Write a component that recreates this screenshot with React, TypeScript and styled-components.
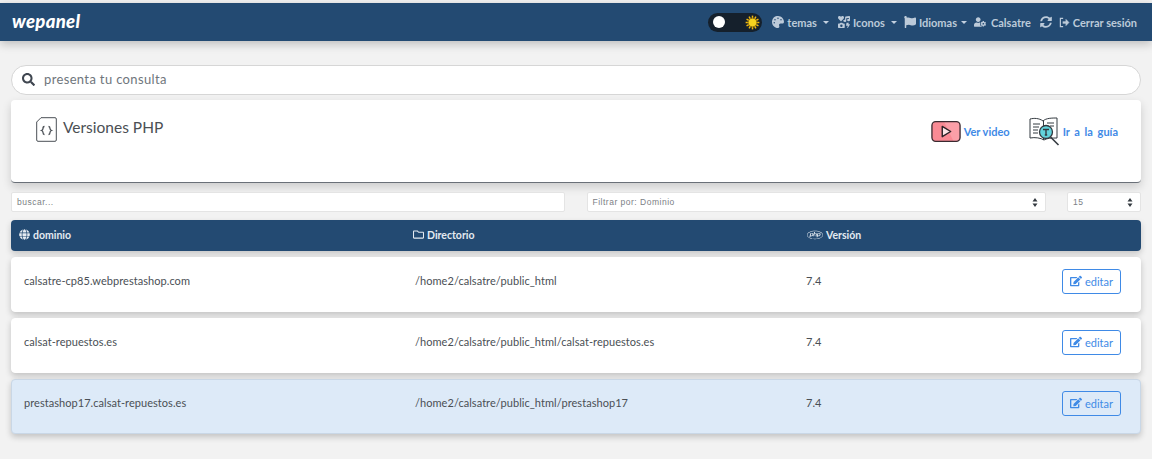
import React from "react";
import styled, { createGlobalStyle } from "styled-components";
import { FaPalette, FaIcons, FaFlag, FaUserCog, FaSyncAlt, FaSearch, FaGlobe, FaRegFolder, FaPhp, FaEdit } from "react-icons/fa";

const Global = createGlobalStyle`
  html, body { margin: 0; padding: 0; background: #f2f2f2; }
  body { font-family: Lato, "Noto Sans", sans-serif; color: #4a4f55; overflow: hidden; }
  * { box-sizing: border-box; }
`;

const Page = styled.div`
  width: 1152px;
  height: 459px;
  padding-top: 3px;
  overflow: hidden;
  background: #f2f2f2;
`;

const Navbar = styled.header`
  height: 38px;
  background: #234a72;
  display: flex;
  align-items: center;
  justify-content: space-between;
  padding: 0 15px 0 12px;
  box-shadow: 0 3px 9px rgba(0, 0, 0, 0.22);
`;

const Logo = styled.span`
  font-family: Lato, sans-serif;
  font-style: italic;
  font-weight: 900;
  font-size: 18.5px;
  color: #fff;
  letter-spacing: 0.3px;
  margin-bottom: 2px;
`;

const NavGroup = styled.nav`
  display: flex;
  align-items: center;
`;

const NavItem = styled.span<{ $ml?: number; $gap?: number }>`
  display: inline-flex;
  align-items: center;
  gap: ${(p) => p.$gap ?? 3}px;
  margin-left: ${(p) => p.$ml ?? 0}px;
  font-family: Lato, sans-serif;
  font-size: 11px;
  font-weight: 700;
  color: #bccad9;
  white-space: nowrap;
  svg { font-size: 12px; }
`;

const Caret = styled.i<{ $ml?: number }>`
  display: inline-block;
  width: 0;
  height: 0;
  margin-left: ${(p) => p.$ml ?? 4}px;
  border-top: 3px solid #c3d0df;
  border-left: 3px solid transparent;
  border-right: 3px solid transparent;
`;

const Toggle = styled.div`
  position: relative;
  width: 54px;
  height: 19px;
  border-radius: 10px;
  background: #15202c;
`;

const Knob = styled.span`
  position: absolute;
  left: 5px;
  top: 3.5px;
  width: 12px;
  height: 12px;
  border-radius: 50%;
  background: #fff;
`;

const SunSlot = styled.span`
  position: absolute;
  right: 2px;
  top: 2px;
  line-height: 0;
`;

const Main = styled.main`
  padding: 24px 11px 0;
`;

const SearchBar = styled.div`
  height: 30px;
  background: #fff;
  border: 1px solid #d6d6d6;
  border-radius: 15px;
  display: flex;
  align-items: center;
  gap: 9px;
  padding: 0 10px 2px;
  font-family: Lato, sans-serif;
  font-size: 13px;
  letter-spacing: 0.35px;
  color: #6f767c;
  svg { color: #3f4650; font-size: 13px; margin-top: 1px; }
`;

const HeaderCard = styled.section`
  margin-top: 5px;
  height: 83px;
  background: #fff;
  border-bottom: 1px solid #6a7078;
  border-radius: 4px;
  box-shadow: 0 4px 10px rgba(0, 0, 0, 0.16);
  display: flex;
  justify-content: space-between;
  align-items: flex-start;
  padding: 17px 23px 0 25px;
`;

const Title = styled.h1`
  margin: 0;
  display: flex;
  align-items: flex-start;
  gap: 6px;
  font-family: Lato, sans-serif;
  font-weight: 400;
  font-size: 15.5px;
  line-height: 20px;
  color: #4b4f54;
`;

const Guides = styled.div`
  display: flex;
  align-items: center;
  gap: 19px;
  margin-top: -1px;
`;

const Guide = styled.a<{ $wordGap?: number }>`
  display: inline-flex;
  align-items: center;
  gap: 3px;
  font-family: Lato, sans-serif;
  font-weight: 700;
  font-size: 11px;
  word-spacing: ${(p) => p.$wordGap ?? 0}px;
  color: #3f8ae6;
`;

const Filters = styled.div`
  margin-top: 9px;
  display: grid;
  grid-template-columns: 554px 459px 74px;
  justify-content: space-between;
  height: 20px;
`;

const Field = styled.div`
  position: relative;
  height: 20px;
  background: #fff;
  border: 1px solid #e4e4e4;
  border-radius: 2px;
  display: flex;
  align-items: center;
  padding: 0 5px;
  font-family: "Liberation Sans", sans-serif;
  font-size: 8.5px;
  letter-spacing: 0.5px;
  color: #7b8085;
`;

const SelectArrows = styled.svg`
  position: absolute;
  right: 7px;
  top: 5px;
`;

const TableHead = styled.div`
  margin-top: 8px;
  height: 31px;
  background: #234a72;
  border-radius: 4px;
  box-shadow: 0 3px 6px rgba(0, 0, 0, 0.18);
  color: #e4eaf1;
  font-family: Lato, sans-serif;
  font-weight: 700;
  font-size: 10.5px;
  display: grid;
  grid-template-columns: 391px 391px 1fr;
  align-items: center;
  padding: 0 0 2px 8px;
`;

const HeadCell = styled.span<{ $indent?: number; $iconSize?: number }>`
  display: flex;
  align-items: center;
  gap: 3px;
  margin-left: ${(p) => p.$indent ?? 0}px;
  svg { font-size: ${(p) => p.$iconSize ?? 11}px; }
`;

const Rows = styled.div`
  margin-top: 6px;
  display: flex;
  flex-direction: column;
  gap: 6px;
`;

const Row = styled.div<{ $active?: boolean }>`
  height: 55px;
  background: ${(p) => (p.$active ? "#ddeaf8" : "#fff")};
  border: 1px solid ${(p) => (p.$active ? "#c9d7e6" : "#fff")};
  border-radius: 4px;
  box-shadow: 0 3px 6px rgba(0, 0, 0, 0.2);
  display: grid;
  grid-template-columns: 391px 391px 1fr auto;
  align-items: center;
  padding: 0 19px 7px 12px;
  font-family: Lato, sans-serif;
  font-size: 11px;
  letter-spacing: 0.05px;
  color: #4a4f55;
`;

const Cell = styled.span`
  padding-bottom: 2px;
`;

const EditButton = styled.button`
  width: 59px;
  height: 25px;
  display: inline-flex;
  align-items: center;
  justify-content: center;
  gap: 3px;
  padding: 0;
  background: transparent;
  border: 1px solid #3f8ae6;
  border-radius: 3px;
  color: #3f8ae6;
  font-family: Lato, sans-serif;
  font-size: 11px;
  svg { font-size: 12px; }
`;

const Sun = () => (
  <svg width="15" height="15" viewBox="0 0 24 24">
    <g stroke="#f2b90f" strokeWidth="2.4">
      {[0, 30, 60, 90, 120, 150].map((a) => (
        <line key={a} x1="12" y1="1" x2="12" y2="23" transform={`rotate(${a} 12 12)`} />
      ))}
    </g>
    <circle cx="12" cy="12" r="7" fill="#f6d21f" stroke="#7a5a06" strokeWidth="1.2" />
  </svg>
);

const SignOut = () => (
  <svg width="11" height="11" viewBox="0 0 24 24" fill="none" stroke="#bccad9" strokeWidth="2.6">
    <path d="M9 3H3v18h6" />
    <path d="M8 12h8" strokeWidth="5" />
    <path d="M15 5l7 7-7 7z" fill="#bccad9" strokeWidth="1" />
  </svg>
);

const CodeFile = () => (
  <svg width="21" height="25" viewBox="0 0 21 25" fill="none" stroke="#4a4f55">
    <path d="M5 .7h14a1.3 1.3 0 0 1 1.3 1.3v21a1.3 1.3 0 0 1-1.3 1.3H2A1.3 1.3 0 0 1 .7 23V5z" strokeWidth="1" fill="#fff" />
    <path d="M8.500 9.500c-1.500 0-1.500 1-1.500 2s-.2 1.500-1.500 2c1.300.5 1.500 1 1.500 2s0 2 1.500 2M12.500 9.500c1.500 0 1.500 1 1.500 2s.2 1.500 1.500 2c-1.300.5-1.500 1-1.500 2s0 2-1.500 2" strokeWidth="1.3" />
  </svg>
);

const PlayIcon = () => (
  <svg width="30" height="23" viewBox="0 0 32 23">
    <rect x="1" y="1" width="30" height="21" rx="4" fill="#f98a94" />
    <path d="M14 1h13a4 4 0 0 1 4 4v13a4 4 0 0 1-4 4H24z" fill="#fb9fa8" />
    <rect x="1" y="1" width="30" height="21" rx="4" fill="none" stroke="#3a2a30" strokeWidth="1.4" />
    <path d="M12 6l9 5.500-9 5.500z" fill="#fde4e6" stroke="#2b2226" strokeWidth="1.5" strokeLinejoin="round" />
  </svg>
);

const BookIcon = () => (
  <svg width="31" height="31" viewBox="0 0 31 31" fill="none" stroke="#333a40" strokeWidth="1">
    <path d="M1 3c4-1 9-1 13 2 3-3 9-3 14-3v20c-5 0-10 0-13 2-3-2-9-3-14-2z" fill="#fff" />
    <path d="M14.500 5v19M4 8h7M4 11h6M4 14h5M4 17h5M18 7h7M21 10h4" />
    <circle cx="17" cy="16" r="6.500" fill="#62d3dc" strokeWidth="1.3" />
    <path d="M14 13.500h6M17 13.500v5.500M15.800 19h2.400" strokeWidth="1.4" />
    <path d="M21.500 21l8 8" strokeWidth="1.6" />
  </svg>
);

const Arrows = () => (
  <SelectArrows width="6" height="9" viewBox="0 0 6 9">
    <path d="M3 0l2.500 3.500h-5zM3 9L.5 5.500h5z" fill="#343a40" />
  </SelectArrows>
);

const rows = [
  { domain: "calsatre-cp85.webprestashop.com", dir: "/home2/calsatre/public_html" },
  { domain: "calsat-repuestos.es", dir: "/home2/calsatre/public_html/calsat-repuestos.es" },
  { domain: "prestashop17.calsat-repuestos.es", dir: "/home2/calsatre/public_html/prestashop17", active: true },
];

export default function App() {
  return (
    <Page>
      <Global />
      <Navbar>
        <Logo>wepanel</Logo>
        <NavGroup>
          <Toggle>
            <Knob />
            <SunSlot><Sun /></SunSlot>
          </Toggle>
          <NavItem $ml={10}><FaPalette />temas<Caret $ml={3} /></NavItem>
          <NavItem $ml={9}><FaIcons />Iconos<Caret $ml={3} /></NavItem>
          <NavItem $ml={7}><FaFlag />Idiomas<Caret $ml={1} /></NavItem>
          <NavItem $ml={7} $gap={5}><FaUserCog />Calsatre</NavItem>
          <NavItem $ml={9}><FaSyncAlt /></NavItem>
          <NavItem $ml={7}><SignOut />Cerrar sesión</NavItem>
        </NavGroup>
      </Navbar>
      <Main>
        <SearchBar><FaSearch />presenta tu consulta</SearchBar>
        <HeaderCard>
          <Title><CodeFile />Versiones PHP</Title>
          <Guides>
            <Guide><PlayIcon />Ver video</Guide>
            <Guide $wordGap={2}><BookIcon />Ir a la guía</Guide>
          </Guides>
        </HeaderCard>
        <Filters>
          <Field>buscar...</Field>
          <Field>Filtrar por: Dominio<Arrows /></Field>
          <Field>15<Arrows /></Field>
        </Filters>
        <TableHead>
          <HeadCell><FaGlobe />dominio</HeadCell>
          <HeadCell $indent={3}><FaRegFolder />Directorio</HeadCell>
          <HeadCell $indent={6} $iconSize={16}><FaPhp />Versión</HeadCell>
        </TableHead>
        <Rows>
          {rows.map((r) => (
            <Row key={r.domain} $active={r.active}>
              <Cell>{r.domain}</Cell>
              <Cell>{r.dir}</Cell>
              <Cell>7.4</Cell>
              <EditButton><FaEdit />editar</EditButton>
            </Row>
          ))}
        </Rows>
      </Main>
    </Page>
  );
}
